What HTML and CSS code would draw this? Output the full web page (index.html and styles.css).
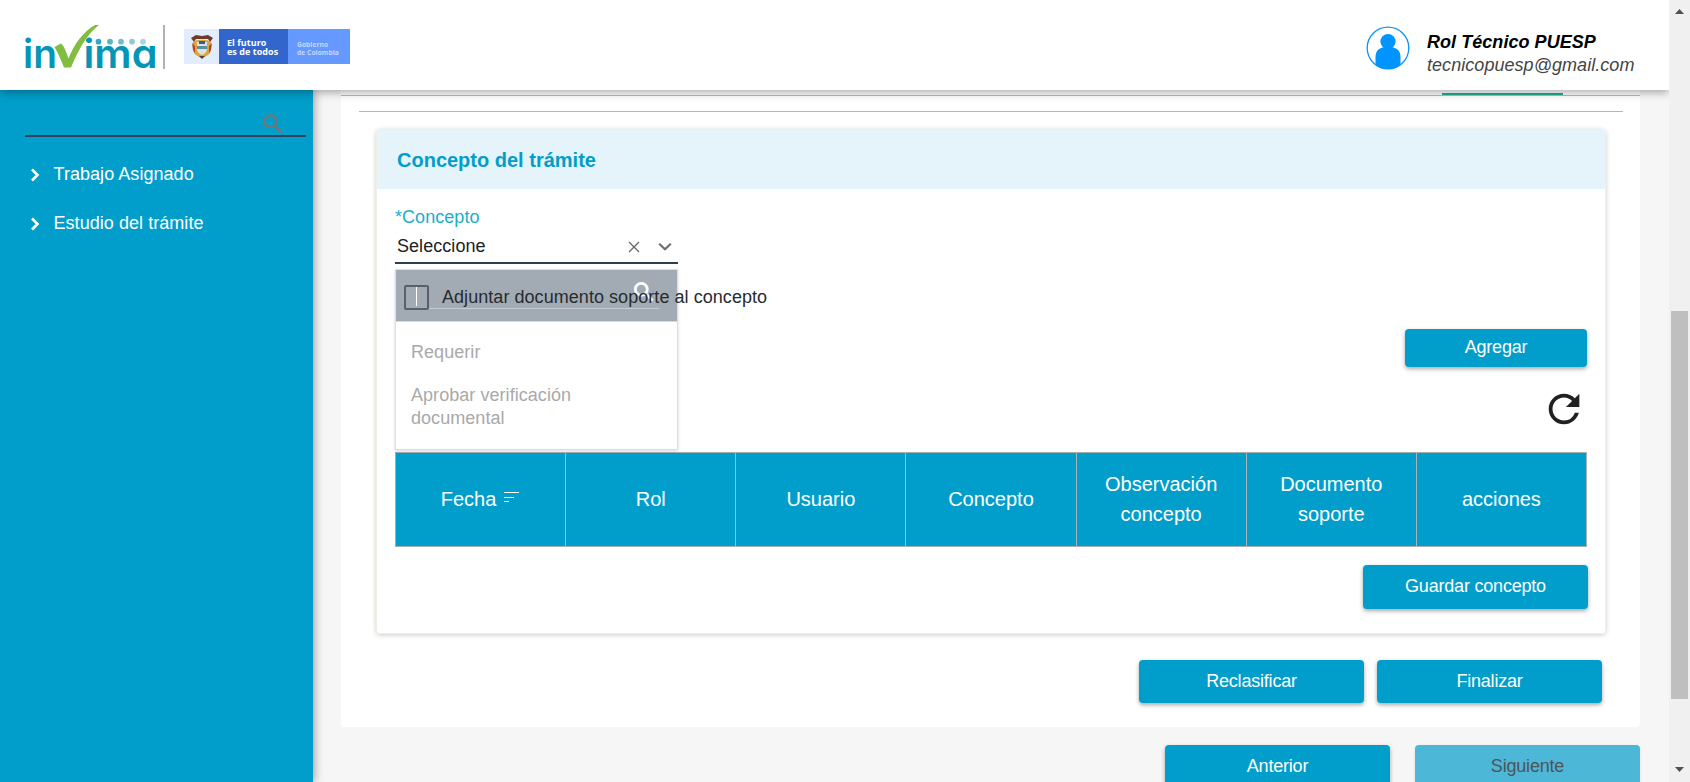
FILE: index.html
```html
<!DOCTYPE html>
<html lang="es">
<head>
<meta charset="utf-8">
<title>Invima</title>
<link rel="stylesheet" href="styles.css">
</head>
<body>
<div class="window">
  <div class="app">
    <header class="header">
      <svg class="logo" width="140" height="66" viewBox="0 -8 140 66">
        <g class="logo-text">
          <text x="0" y="44.500" textLength="34" lengthAdjust="spacingAndGlyphs">in</text>
          <text x="60.500" y="44.500" textLength="74" lengthAdjust="spacingAndGlyphs">ima</text>
        </g>
        <path d="M31.500 24l6.500-3.500c3 2 5.500 9 7.500 15C51 21 61 8 72 2h4C63 12 55 28 48 44.500h-7C38.500 38 35.500 31 31.500 24z" fill="#80bd41"/>
        <circle cx="75.500" cy="18.700" r="2.900" fill="#3ba6bf"/>
        <circle cx="87" cy="18.700" r="2.900" fill="#5fb2c6"/>
        <circle cx="98" cy="18.700" r="2.900" fill="#74bccd"/>
        <circle cx="109" cy="18.700" r="2.900" fill="#8fc9d6"/>
        <circle cx="120" cy="18.700" r="2.900" fill="#abd5de"/>
      </svg>
      <div class="divider"></div>
      <div class="gov">
        <div class="gov-crest">
          <svg width="24" height="28" viewBox="0 0 24 28">
            <path d="M1 5l5-3 6 1 6-1 5 3-3 4-2-3H6L4 9z" fill="#6e3a2b"/>
            <path d="M3 9c3-3 15-3 18 0v7c0 5-4 7-9 9-5-2-9-4-9-9z" fill="#dba539"/>
            <path d="M7 9h10v7c0 3-2 5-5 6-3-1-5-3-5-6z" fill="#d8e5e6"/>
            <path d="M7 13h10v3H7z" fill="#5e8ea0"/>
            <path d="M9 8h6v3H9z" fill="#3f5a8c"/>
            <path d="M2 10l3 3v7l-2-3zM22 10l-3 3v7l2-3z" fill="#b44432"/>
            <path d="M9 23h6l-3 3z" fill="#563b35"/>
          </svg>
        </div>
        <div class="gov-main">El futuro<br>es de todos</div>
        <div class="gov-side">Gobierno<br>de Colombia</div>
      </div>
      <div class="user">
        <svg width="44" height="44" viewBox="0 0 44 44">
          <circle cx="22" cy="22" r="20.800" fill="#fff" stroke="#0b93fb" stroke-width="1.300"/>
          <circle cx="22" cy="15.600" r="7.600" fill="#0094ff"/>
          <path d="M9.500 38.500V31c0-5.500 3-8.500 7-9.500h11c4 1 7 4 7 9.500v7.500C27 44.500 17 44.500 9.500 38.500z" fill="#0094ff"/>
        </svg>
        <div class="user-text">
          <div class="user-name">Rol Técnico PUESP</div>
          <div class="user-mail">tecnicopuesp@gmail.com</div>
        </div>
      </div>
    </header>
    <div class="body">
      <nav class="sidebar">
        <div class="side-search">
          <svg width="26" height="26" viewBox="0 0 24 24"><path fill="#757575" d="M15.500 14h-.79l-.28-.27A6.471 6.471 0 0 0 16 9.500 6.500 6.500 0 1 0 9.500 16c1.610 0 3.090-.59 4.230-1.570l.27.28v.79l5 4.990L20.490 19l-4.990-5zm-6 0C7.010 14 5 11.990 5 9.500S7.010 5 9.500 5 14 7.010 14 9.500 11.990 14 9.500 14z"/></svg>
        </div>
        <a class="side-item"><svg width="10" height="14" viewBox="0 0 10 14"><path d="M2 1.500L7.500 7 2 12.500" fill="none" stroke="#fff" stroke-width="2.600"/></svg>Trabajo Asignado</a>
        <a class="side-item"><svg width="10" height="14" viewBox="0 0 10 14"><path d="M2 1.500L7.500 7 2 12.500" fill="none" stroke="#fff" stroke-width="2.600"/></svg>Estudio del trámite</a>
      </nav>
      <main class="main">
        <section class="panel">
          <div class="tabs"><div class="tab-ink"></div></div>
          <div class="rule"></div>
          <div class="card">
            <h2 class="card-title">Concepto del trámite</h2>
            <div class="card-body">
              <div class="field">
                <label class="label">*Concepto</label>
                <div class="select">
                  <span>Seleccione</span>
                  <svg class="clear" width="12" height="12" viewBox="0 0 12 12"><path d="M1 1l10 10M11 1L1 11" stroke="#666" stroke-width="1.300"/></svg>
                  <svg width="14" height="10" viewBox="0 0 14 10"><path d="M1.200 1.700L7 7.300l5.800-5.600" fill="none" stroke="#6e6e6e" stroke-width="2.200"/></svg>
                </div>
                <div class="dropdown">
                  <div class="dd-search">
                    <div class="dd-input"><span class="caret"></span></div>
                    <svg class="dd-icon" width="26" height="26" viewBox="0 0 24 24"><path fill="#fff" stroke="#fff" stroke-width=".6" d="M15.500 14h-.79l-.28-.27A6.471 6.471 0 0 0 16 9.500 6.500 6.500 0 1 0 9.500 16c1.610 0 3.090-.59 4.230-1.570l.27.28v.79l5 4.990L20.490 19l-4.990-5zm-6 0C7.010 14 5 11.990 5 9.500S7.010 5 9.500 5 14 7.010 14 9.500 11.990 14 9.500 14z"/></svg>
                  </div>
                  <div class="dd-list">
                    <div class="dd-option">Requerir</div>
                    <div class="dd-option">Aprobar verificación documental</div>
                  </div>
                </div>
              </div>
              <div class="check"><span class="box"></span><span>Adjuntar documento soporte al concepto</span></div>
              <div class="right"><button class="btn btn-add">Agregar</button></div>
              <div class="right refresh"><svg width="46" height="46" viewBox="0 0 24 24"><path fill="#212121" d="M17.650 6.350A7.958 7.958 0 0 0 12 4c-4.420 0-7.990 3.580-7.990 8s3.570 8 7.990 8c3.730 0 6.840-2.550 7.730-6h-2.080A5.990 5.990 0 0 1 12 18c-3.310 0-6-2.690-6-6s2.690-6 6-6c1.660 0 3.140.69 4.220 1.780L13 11h7V4l-2.350 2.350z"/></svg></div>
              <div class="table">
                <div class="th">Fecha<svg class="sort" width="16" height="12" viewBox="0 0 16 12"><path d="M0 1.500h15M0 6.500h10M0 10.500h5" stroke="#fff" stroke-width="1.200"/></svg></div>
                <div class="th">Rol</div>
                <div class="th">Usuario</div>
                <div class="th">Concepto</div>
                <div class="th">Observación concepto</div>
                <div class="th">Documento soporte</div>
                <div class="th">acciones</div>
              </div>
              <div class="right save"><button class="btn btn-save">Guardar concepto</button></div>
            </div>
          </div>
          <div class="actions">
            <button class="btn">Reclasificar</button>
            <button class="btn">Finalizar</button>
          </div>
        </section>
        <div class="pager">
          <button class="btn">Anterior</button>
          <button class="btn btn-off">Siguiente</button>
        </div>
      </main>
    </div>
  </div>
  <div class="scrollbar">
    <svg width="9" height="5" viewBox="0 0 9 5"><path d="M4.500 0L9 5H0z" fill="#505050"/></svg>
    <div class="thumb"></div>
    <svg class="down" width="9" height="5" viewBox="0 0 9 5"><path d="M4.500 5L9 0H0z" fill="#505050"/></svg>
  </div>
</div>
</body>
</html>
```
FILE: styles.css
```css
* { box-sizing: border-box; }
body { margin: 0; font-family: "Liberation Sans", Arial, sans-serif; font-size: 18px; letter-spacing: .05px; color: #212121; }
.window { display: flex; width: 1690px; height: 782px; overflow: hidden; }
.app { display: flex; flex-direction: column; width: 1669px; height: 782px; overflow: hidden; }
.header { position: relative; z-index: 5; flex: none; display: flex; align-items: flex-start; height: 90px; background: #fff; box-shadow: 0 2px 9px rgba(0,0,0,.36); }
.logo { margin: 15px 0 0 23px; }
.logo-text text { font-family: Inter, sans-serif; font-size: 40px; font-weight: 600; letter-spacing: 0; font-feature-settings: "cv11"; fill: #0595b7; }
.divider { width: 2px; height: 44px; margin: 25px 0 0; background: #adb2b6; }
.gov { display: flex; width: 166px; height: 35px; margin: 29px 0 0 19px; color: #fff; font-family: "Open Sans", sans-serif; font-weight: 700; }
.gov-crest { width: 35px; padding: 4px 0 0 6px; background: #e1ecfd; }
.gov-main { width: 69px; padding: 9px 0 0 8px; background: #3366cc; font-size: 9px; line-height: 9px; white-space: nowrap; }
.gov-side { width: 62px; padding: 12px 0 0 9px; background: #6699ff; color: #c3d7ff; font-size: 6.700px; line-height: 7.500px; white-space: nowrap; }
.user { display: flex; margin-left: auto; padding: 26px 34px 0 0; }
.user-text { width: 208px; margin-left: 17px; padding-top: 5px; font-style: italic; line-height: 23px; }
.user-name { font-weight: 700; color: #000; }
.user-mail { color: #444; }
.body { display: flex; flex: 1; min-height: 0; background: #f6f6f6; }
.sidebar { position: relative; z-index: 2; flex: none; width: 313px; background: #019ecb; box-shadow: 1px 0 9px rgba(0,0,0,.4); }
.side-search { display: flex; justify-content: flex-end; width: 281px; height: 47px; margin: 0 0 13px 25px; padding: 21px 20px 0 0; border-bottom: 2px solid #2f4358; }
.side-item { display: flex; align-items: center; height: 49px; padding-left: 30px; gap: 13.500px; color: #fff; }
.main { width: 1299px; margin-left: 28px; }
.panel { height: 637px; background: #fff; border-radius: 0 0 4px 4px; }
.tabs { display: flex; align-items: flex-end; justify-content: flex-end; height: 6px; padding-right: 77px; border-bottom: 1px solid #b9b9b9; }
.tab-ink { width: 121px; height: 2px; background: #1db190; }
.rule { height: 1px; margin: 15px 17px 0 18px; background: #b7b7b7; }
.card { width: 1230px; height: 505px; margin: 17px 0 0 35px; border: 1px solid #edf0e0; border-radius: 4px; box-shadow: 0 1px 5px rgba(0,0,0,.2); }
.card-title { height: 59px; margin: 0; padding: 0 20px; background: #e4f4fa; color: #019ecb; font-size: 20px; line-height: 60px; letter-spacing: 0; }
.card-body { padding: 1px 18px 0; }
.field { position: relative; width: 283px; height: 75px; padding-top: 17px; }
.label { display: block; height: 24px; line-height: 21px; color: #1aaecb; }
.select { display: flex; align-items: center; height: 33px; padding: 0 6px 0 2px; border-bottom: 2px solid #2c3e50; }
.clear { margin: 0 18px 0 auto; }
.dropdown { position: absolute; z-index: 1; top: 79px; left: 0; width: 283px; height: 181px; border: 1px solid #dedede; background: #fff; box-shadow: 0 1px 3px rgba(0,0,0,.16); }
.dd-search { display: flex; height: 52px; padding: 9px 0 0 17px; background: #a2abb3; border-bottom: 1px solid #dadada; }
.dd-input { width: 246px; height: 30px; padding: 7px 0 0 3px; border-bottom: 1px solid #c5cacf; }
.caret { display: block; width: 1px; height: 20px; background: #fff; }
.dd-icon { margin: 0 0 0 -28px; }
.dd-list { padding: 19px 50px 0 15px; line-height: 23px; color: #a9a9a9; }
.dd-option { margin-bottom: 20px; }
.check { position: relative; z-index: 2; display: flex; align-items: center; height: 25px; margin: 20px 0 19px 9px; gap: 13px; white-space: nowrap; color: #262b30; }
.box { width: 25px; height: 25px; border: 2px solid #596168; border-radius: 2px; }
.right { display: flex; justify-content: flex-end; }
.btn { display: block; width: 225px; height: 43px; padding: 0; border: 0; border-radius: 4px; background: #019ecb; color: #fff; font: 18px "Liberation Sans", Arial, sans-serif; letter-spacing: -.2px; text-align: center; box-shadow: 0 2px 4px rgba(0,0,0,.34); }
.btn-add { width: 182px; height: 38px; padding-bottom: 2px; }
.btn-off { background: #4db7d8; color: #4d5559; box-shadow: 0 1px 3px rgba(0,0,0,.1); }
.refresh { height: 66px; margin-top: 19px; }
.table { display: grid; grid-template-columns: repeat(7, 1fr); width: 1192px; height: 95px; border: 1px solid #a9adaf; border-right: 0; background: #019ecb; }
.th { display: flex; align-items: center; justify-content: center; padding: 0 25px 1px; border-right: 1px solid #a9b5ba; color: #fff; font-size: 20px; line-height: 30px; letter-spacing: 0; text-align: center; }
.sort { margin: -4px 0 0 8px; }
.save { margin: 18px -1px 0 0; }
.btn-save { width: 225px; height: 44px; padding-bottom: 2px; }
.actions { display: flex; justify-content: flex-end; gap: 13px; margin: 26px 38px 0 0; }
.pager { display: flex; justify-content: flex-end; gap: 25px; margin-top: 18px; }
.scrollbar { display: flex; flex-direction: column; align-items: center; width: 21px; height: 782px; padding: 9px 0 10px; background: #f0f0f0; }
.thumb { flex: none; width: 17px; height: 388px; margin-top: 297px; background: #bfbfbf; }
.down { margin-top: auto; }
```
